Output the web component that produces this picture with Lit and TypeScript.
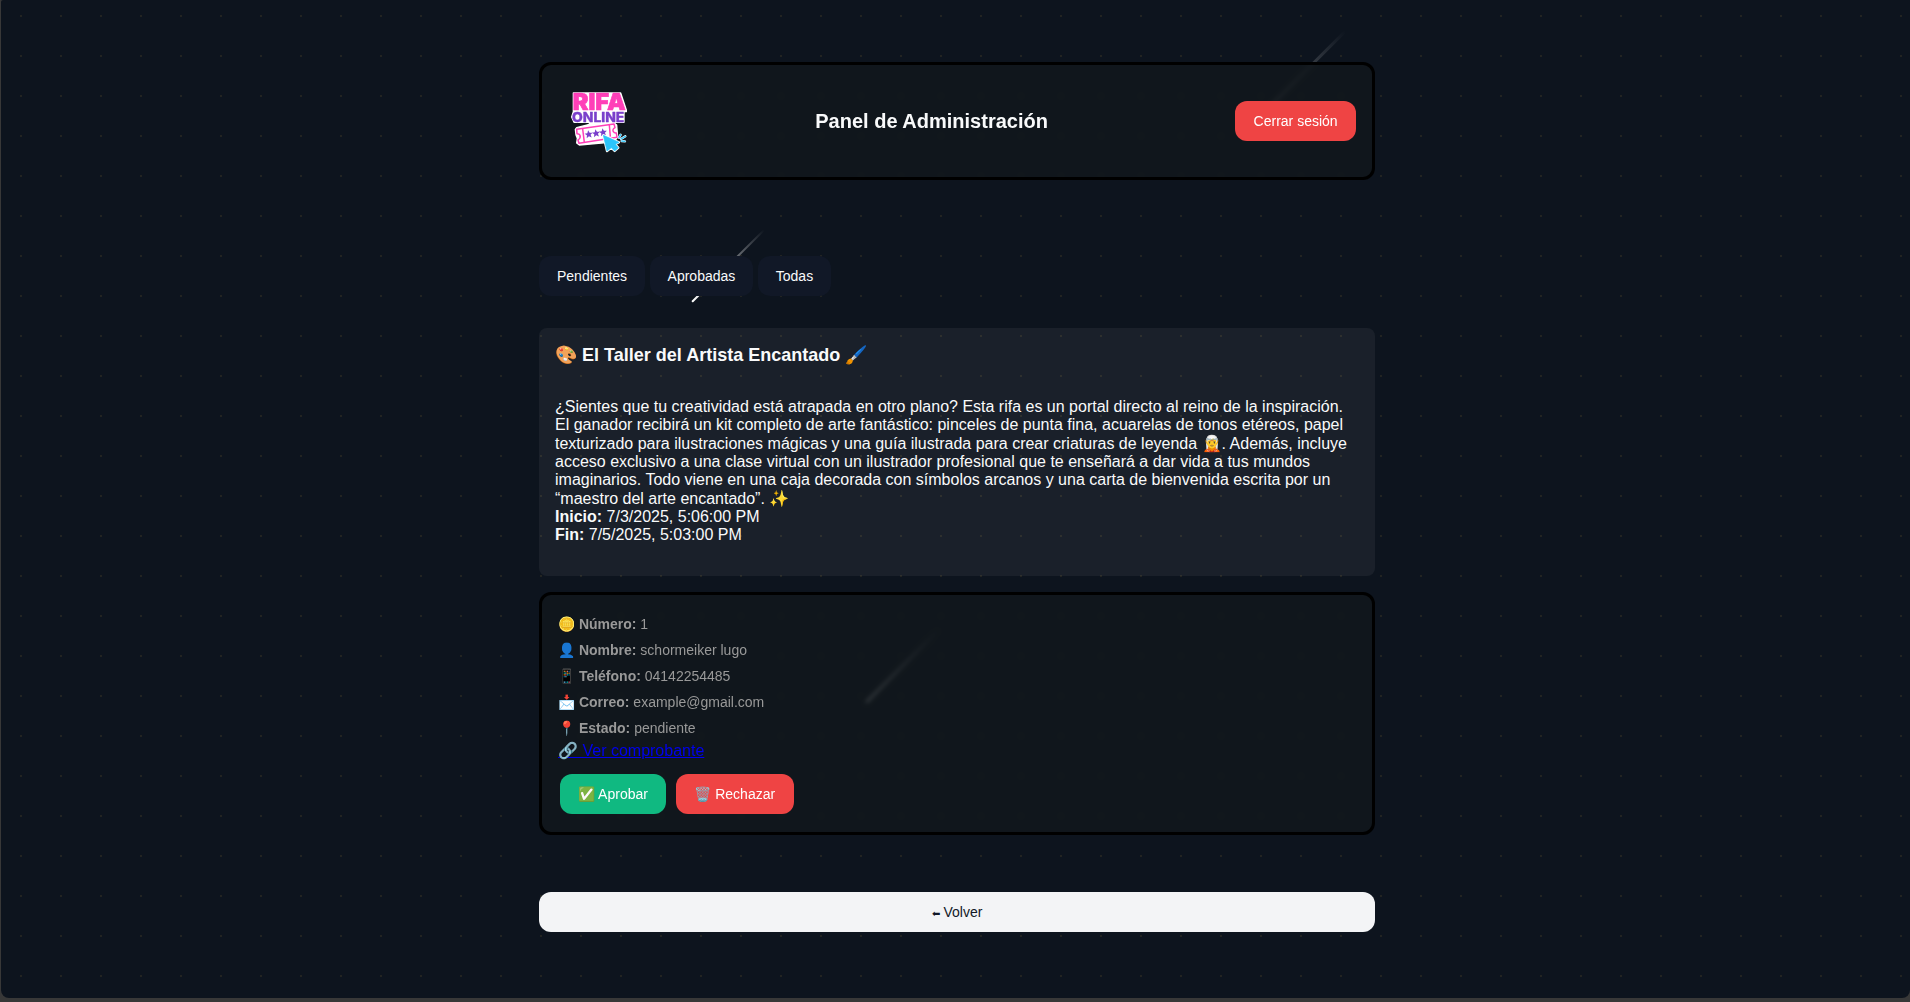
import { LitElement, html, css, svg } from "lit";
import { customElement } from "lit/decorators.js";

const star = (x: number, y: number) =>
  svg`<path transform="translate(${x} ${y}) rotate(-8)" fill="#7a3fcb" d="M0-12 3.400-4 12-3.400 5.500 2.200 7.500 10.500 0 6-7.500 10.500-5.500 2.200-12-3.400-3.400-4Z"/>`;

@customElement("rifa-logo")
export class RifaLogo extends LitElement {
  static styles = css`
    :host {
      display: block;
      width: 80px;
      height: 80px;
      margin-right: -10px;
    }
    svg {
      display: block;
    }
    .word {
      font-family: Inter, "Open Sans", sans-serif;
      font-weight: 900;
      stroke-linejoin: round;
    }
    .rifa {
      font-size: 69px;
      fill: #ff3fb8;
      stroke: #ff3fb8;
      stroke-width: 2px;
    }
    .online {
      font-size: 39.5px;
      font-weight: 800;
      fill: #7a3fcb;
      stroke: #7a3fcb;
      stroke-width: 1px;
    }
  `;

  render() {
    return html`<svg viewBox="24 18 240 240" width="80" height="80" role="img">
      <path
        fill="#fff"
        stroke="#fff"
        stroke-width="4"
        stroke-linejoin="round"
        d="M70 54H212L229 105V110H222V142H195V146L200 150L203 186L190 203L170 203L88 210L80 204L82 190L78 180L76 163L80 158L118 148V142H72L65 126L70 110Z"
      />
      <text class="word rifa" x="68" y="106" textLength="159" lengthAdjust="spacingAndGlyphs">RIFA</text>
      <text class="word online" x="66" y="141" textLength="157" lengthAdjust="spacingAndGlyphs">ONLINE</text>
      <g fill="#fff" stroke="#ff3fb8" stroke-width="4.500" stroke-linejoin="round">
        <path d="M80 163 192 147 195 158Q186 163 190 170Q193 175 199 174L201 187 87 205 84 195Q93 189 90 181Q88 176 81 176Z" />
        <path d="M98 162 103 202M178 150 181 185" fill="none" />
      </g>
      ${star(116, 178)} ${star(138, 175)} ${star(159, 172)}
      <path
        d="M160 181 207 202 196 208 205 218 194 228 184 218 171 228Z"
        fill="none"
        stroke="#fff"
        stroke-width="7"
        stroke-linejoin="round"
      />
      <path d="M207 188 212 179M213 192 226 184M215 198 225 199" stroke="#fff" stroke-width="7" stroke-linecap="round" />
      <path d="M207 188 212 179M213 192 226 184M215 198 225 199" stroke="#2cc5fb" stroke-width="4" stroke-linecap="round" />
      <path
        d="M160 181 207 202 196 208 205 218 194 228 184 218 171 228Z"
        fill="#2cc5fb"
        stroke="#2cc5fb"
        stroke-width="2"
        stroke-linejoin="round"
      />
    </svg>`;
  }
}

@customElement("app-root")
export class AppRoot extends LitElement {
  static styles = css`
    :host {
      display: block;
      height: 1002px;
      overflow: hidden;
      background: #383838;
      font-family: "Liberation Sans", Arial, sans-serif;
      color: #f9fafb;
    }
    * {
      box-sizing: border-box;
    }
    .page {
      position: relative;
      height: 998px;
      margin-left: 1px;
      padding-top: 62px;
      border-radius: 2px 0 8px 8px;
      overflow: hidden;
      background-color: #0d141e;
      background-image: radial-gradient(circle, #222422 1px, transparent 1px);
      background-size: 40px 40px;
      background-position: 0 -4px;
    }
    .meteor {
      position: absolute;
      width: 102px;
      height: 2px;
      border-radius: 2px;
      transform-origin: 0 50%;
      transform: rotate(-45deg);
      background: linear-gradient(90deg, #fff, transparent);
    }
    .m1 {
      left: 1241px;
      top: 133px;
      width: 146px;
      height: 3px;
      opacity: 0.5;
    }
    .m2 {
      left: 691px;
      top: 301px;
    }
    .m3 {
      left: 865px;
      top: 701px;
      width: 104px;
      height: 3px;
    }
    .content {
      position: relative;
      width: 836px;
      margin-left: 538px;
      display: flex;
      flex-direction: column;
    }
    .panel {
      border: 3px solid #000;
      border-radius: 12px;
      background: rgba(18, 23, 28, 0.86);
      backdrop-filter: blur(2px);
    }
    .header {
      height: 118px;
      padding: 16px;
      display: flex;
      align-items: center;
      justify-content: space-between;
    }
    h1 {
      margin: 0;
      font-size: 20px;
      line-height: 24px;
    }
    button {
      height: 40px;
      padding: 0 18px;
      border: 0;
      border-radius: 12px;
      font: 14px "Liberation Sans", Arial, sans-serif;
      color: #fff;
      white-space: nowrap;
    }
    .danger {
      padding: 0 18.4px;
      background: #ef4444;
    }
    .success {
      background: #10b981;
    }
    .tabs {
      display: flex;
      gap: 4.5px;
      margin-top: 76px;
    }
    .tabs button {
      background: #111827;
      color: #f9fafb;
    }
    .raffle {
      height: 248px;
      margin-top: 32px;
      padding: 16px;
      border-radius: 8px;
      background: rgba(255, 255, 255, 0.055);
    }
    h2 {
      margin: 0 0 32px;
      font-size: 18.02px;
      line-height: 22px;
    }
    .raffle p {
      margin: 0;
      font-size: 16px;
      line-height: normal;
    }
    .ticket {
      height: 243px;
      margin-top: 16px;
      padding: 16px;
    }
    .field {
      height: 26px;
      font-size: 14px;
      line-height: 26px;
      color: #999;
    }
    .link {
      display: block;
      height: 18px;
      margin-top: 1px;
      line-height: 18px;
      font-size: 16px;
      color: #0000ee;
    }
    .actions {
      display: flex;
      gap: 10px;
      margin: 14px 0 0 2px;
    }
    .back {
      margin-top: 57px;
      background: #f3f4f6;
      color: #111827;
    }
    .arrow {
      font-size: 10px;
    }
  `;

  private fields = [
    ["🪙", "Número", "1"],
    ["👤", "Nombre", "schormeiker lugo"],
    ["📱", "Teléfono", "04142254485"],
    ["📩", "Correo", "example@gmail.com"],
    ["📍", "Estado", "pendiente"],
  ];

  render() {
    return html`<div class="page">
      <i class="meteor m1"></i><i class="meteor m2"></i><i class="meteor m3"></i>
      <main class="content">
        <header class="panel header">
          <rifa-logo></rifa-logo>
          <h1>Panel de Administración</h1>
          <button class="danger">Cerrar sesión</button>
        </header>
        <nav class="tabs">
          <button>Pendientes</button>
          <button>Aprobadas</button>
          <button>Todas</button>
        </nav>
        <section class="raffle">
          <h2>🎨 El Taller del Artista Encantado 🖌️</h2>
          <p>
            ¿Sientes que tu creatividad está atrapada en otro plano? Esta rifa es un portal directo al reino de la
            inspiración. El ganador recibirá un kit completo de arte fantástico: pinceles de punta fina, acuarelas de
            tonos etéreos, papel texturizado para ilustraciones mágicas y una guía ilustrada para crear criaturas de
            leyenda 🧝. Además, incluye acceso exclusivo a una clase virtual con un ilustrador profesional que te
            enseñará a dar vida a tus mundos imaginarios. Todo viene en una caja decorada con símbolos arcanos y una
            carta de bienvenida escrita por un “maestro del arte encantado”. ✨<br />
            <strong>Inicio:</strong> 7/3/2025, 5:06:00 PM<br />
            <strong>Fin:</strong> 7/5/2025, 5:03:00 PM
          </p>
        </section>
        <section class="panel ticket">
          ${this.fields.map(([icon, label, value]) => html`<div class="field">${icon} <strong>${label}:</strong> ${value}</div>`)}
          <a class="link" href="#">🔗 Ver comprobante</a>
          <div class="actions">
            <button class="success">✅ Aprobar</button>
            <button class="danger">🗑️ Rechazar</button>
          </div>
        </section>
        <button class="back"><span class="arrow">⬅</span> Volver</button>
      </main>
    </div>`;
  }
}
